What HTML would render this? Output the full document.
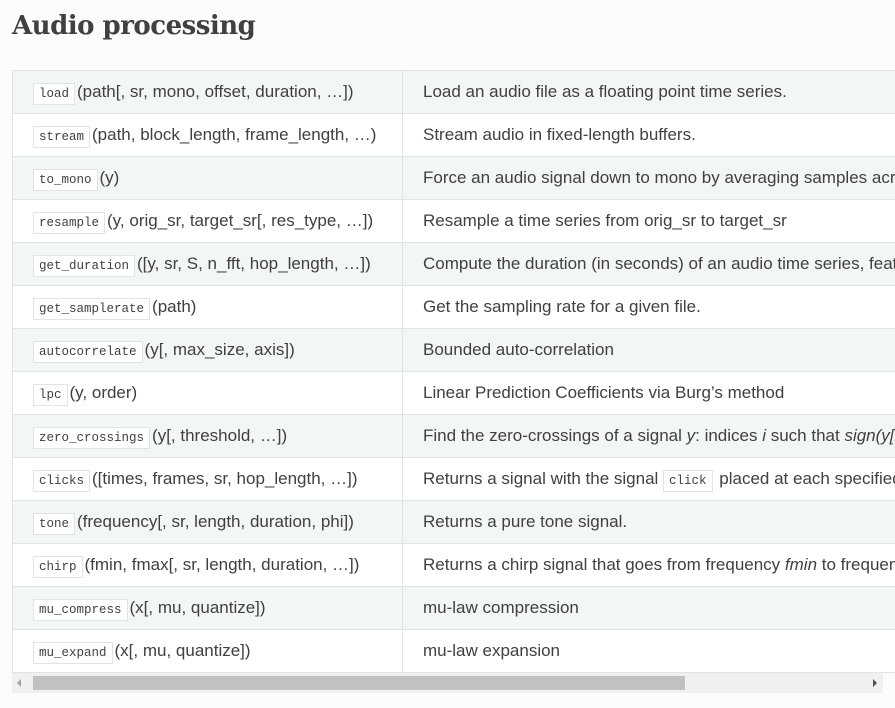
<!DOCTYPE html>
<html><head><style>
body{margin:0;background:#fcfcfc;font-family:"Liberation Sans",sans-serif;color:#404040;width:895px;height:708px;overflow:hidden}
h1{position:absolute;left:12px;top:11px;margin:0;font-size:26px;font-weight:bold;color:#404040;font-family:"DejaVu Serif","Liberation Serif",serif;letter-spacing:-0.5px}
.wrap{position:absolute;left:12px;top:70px;width:883px;overflow:hidden}
table{border-collapse:collapse;width:1100px;font-size:17px;table-layout:fixed}
td{border:1px solid #e1e4e5;height:43px;padding:0 0 0 20px;white-space:nowrap;box-sizing:border-box;overflow:hidden}
td:first-child{width:390px}
tr:nth-child(odd) td{background:#f3f6f6}
tr:nth-child(even) td{background:#fff}
code{font-family:"Liberation Mono",monospace;font-size:12.5px;background:#fff;border:1px solid #e1e4e5;padding:3px 5px;color:#404040;margin-right:2px}
.sb{position:absolute;left:12px;top:673px;width:871px;height:20px;background:#f0f0f0}
.th{position:absolute;left:21px;top:3px;width:652px;height:14px;background:#c1c1c1}
.al{position:absolute;left:5px;top:6px;width:0;height:0;border:4px solid transparent;border-right-color:#a3a3a3;border-left:0}
.ar{position:absolute;right:6px;top:6px;width:0;height:0;border:4px solid transparent;border-left-color:#505050;border-right:0}
</style></head><body>
<h1>Audio processing</h1>
<div class="wrap"><table>
<tr><td><code>load</code>(path[, sr, mono, offset, duration, …])</td><td>Load an audio file as a floating point time series.</td></tr>
<tr><td><code>stream</code>(path, block_length, frame_length, …)</td><td>Stream audio in fixed-length buffers.</td></tr>
<tr><td><code>to_mono</code>(y)</td><td>Force an audio signal down to mono by averaging samples across channels.</td></tr>
<tr><td><code>resample</code>(y, orig_sr, target_sr[, res_type, …])</td><td>Resample a time series from orig_sr to target_sr</td></tr>
<tr><td><code>get_duration</code>([y, sr, S, n_fft, hop_length, …])</td><td>Compute the duration (in seconds) of an audio time series, feature matrix, or filename.</td></tr>
<tr><td><code>get_samplerate</code>(path)</td><td>Get the sampling rate for a given file.</td></tr>
<tr><td><code>autocorrelate</code>(y[, max_size, axis])</td><td>Bounded auto-correlation</td></tr>
<tr><td><code>lpc</code>(y, order)</td><td>Linear Prediction Coefficients via Burg’s method</td></tr>
<tr><td><code>zero_crossings</code>(y[, threshold, …])</td><td>Find the zero-crossings of a signal <i>y</i>: indices <i>i</i> such that <i>sign(y[i]) != sign(y[j])</i>.</td></tr>
<tr><td><code>clicks</code>([times, frames, sr, hop_length, …])</td><td>Returns a signal with the signal <code>click</code> placed at each specified time</td></tr>
<tr><td><code>tone</code>(frequency[, sr, length, duration, phi])</td><td>Returns a pure tone signal.</td></tr>
<tr><td><code>chirp</code>(fmin, fmax[, sr, length, duration, …])</td><td>Returns a chirp signal that goes from frequency <i>fmin</i> to frequency <i>fmax</i></td></tr>
<tr><td><code>mu_compress</code>(x[, mu, quantize])</td><td>mu-law compression</td></tr>
<tr><td><code>mu_expand</code>(x[, mu, quantize])</td><td>mu-law expansion</td></tr>
</table></div>
<div class="sb"><div class="al"></div><div class="th"></div><div class="ar"></div></div>
</body></html>
